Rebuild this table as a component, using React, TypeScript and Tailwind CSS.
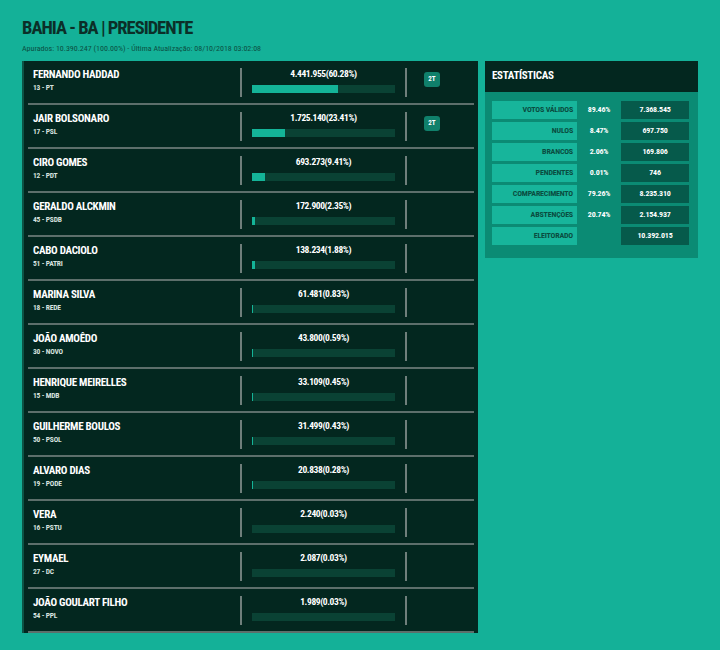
import React from 'react';

type Candidate = {
    name: string;
    party: string;
    votes: string;
    pct: string;
    value: number;
    second?: boolean;
};

const candidates: Candidate[] = [
    { name: 'FERNANDO HADDAD', party: '13 - PT', votes: '4.441.955', pct: '60.28%', value: 60.28, second: true },
    { name: 'JAIR BOLSONARO', party: '17 - PSL', votes: '1.725.140', pct: '23.41%', value: 23.41, second: true },
    { name: 'CIRO GOMES', party: '12 - PDT', votes: '693.273', pct: '9.41%', value: 9.41 },
    { name: 'GERALDO ALCKMIN', party: '45 - PSDB', votes: '172.900', pct: '2.35%', value: 2.35 },
    { name: 'CABO DACIOLO', party: '51 - PATRI', votes: '138.234', pct: '1.88%', value: 1.88 },
    { name: 'MARINA SILVA', party: '18 - REDE', votes: '61.481', pct: '0.83%', value: 0.83 },
    { name: 'JOÃO AMOÊDO', party: '30 - NOVO', votes: '43.800', pct: '0.59%', value: 0.59 },
    { name: 'HENRIQUE MEIRELLES', party: '15 - MDB', votes: '33.109', pct: '0.45%', value: 0.45 },
    { name: 'GUILHERME BOULOS', party: '50 - PSOL', votes: '31.499', pct: '0.43%', value: 0.43 },
    { name: 'ALVARO DIAS', party: '19 - PODE', votes: '20.838', pct: '0.28%', value: 0.28 },
    { name: 'VERA', party: '16 - PSTU', votes: '2.240', pct: '0.03%', value: 0.03 },
    { name: 'EYMAEL', party: '27 - DC', votes: '2.087', pct: '0.03%', value: 0.03 },
    { name: 'JOÃO GOULART FILHO', party: '54 - PPL', votes: '1.989', pct: '0.03%', value: 0.03 },
];

const stats = [
    { label: 'VOTOS VÁLIDOS', pct: '89.46%', value: '7.368.545' },
    { label: 'NULOS', pct: '8.47%', value: '697.750' },
    { label: 'BRANCOS', pct: '2.06%', value: '169.806' },
    { label: 'PENDENTES', pct: '0.01%', value: '746' },
    { label: 'COMPARECIMENTO', pct: '79.26%', value: '8.235.310' },
    { label: 'ABSTENÇÕES', pct: '20.74%', value: '2.154.937' },
    { label: 'ELEITORADO', pct: '', value: '10.392.015' },
];

function CandidateRow({ c }: { c: Candidate }) {
    return (
        <div className="mx-[4px] flex h-[44px] border-b-2 border-[#5d6f6b]">
            <div className="flex w-[212px] flex-col pl-[5px] pt-[7px]">
                <span className="text-[11px] font-bold leading-[14px] tracking-[-0.3px] text-white">{c.name}</span>
                <span className="mt-[1px] text-[7.5px] font-bold leading-[10px] tracking-[-0.2px] text-[#d6e2df]">{c.party}</span>
            </div>
            <div className="mt-[7px] h-[29px] w-[2px] bg-[#6f7f7b]" />
            <div className="flex w-[163px] flex-col items-center pt-[7px]">
                <span className="text-[9.5px] font-bold leading-[11px] tracking-[-0.4px] text-white">
                    {c.votes}({c.pct})
                </span>
                <div className="mt-[6px] h-[8px] w-[143px] bg-[#0a4234]">
                    <div className="h-full bg-[#14b498]" style={{ width: `${c.value}%` }} />
                </div>
            </div>
            <div className="mt-[7px] h-[29px] w-[2px] bg-[#6f7f7b]" />
            <div className="flex flex-1 pl-[17px] pt-[11px]">
                {c.second && (
                    <span className="flex h-[15px] w-[16px] items-center justify-center rounded-[3px] bg-[#10806b] text-[7px] font-bold text-white">
                        2T
                    </span>
                )}
            </div>
        </div>
    );
}

export default function App() {
    return (
        <main className="min-h-[650px] w-[720px] bg-[#14b198] px-[22px] pt-[16px] font-['Roboto',sans-serif] font-stretch-[75%]">
            <h1 className="text-[18.5px] font-bold leading-[24px] tracking-[-1px] text-[#0b2f28]">BAHIA - BA | PRESIDENTE</h1>
            <p className="mt-[4px] text-[8px] leading-[10px] text-[#0b4f42]">
                Apurados: 10.390.247 (100.00%) - Última Atualização: 08/10/2018 03:02:08
            </p>

            <div className="mt-[7px] flex items-start gap-[7px]">
                {/* Candidates list */}
                <section className="w-[456px] border-l-2 border-[#0c5546] bg-[#03271f]">
                    {candidates.map(c => (
                        <CandidateRow key={c.name} c={c} />
                    ))}
                </section>

                {/* Statistics */}
                <section className="w-[213px]">
                    <div className="flex h-[31px] items-center bg-[#03271f] px-[7px]">
                        <h2 className="text-[11px] font-bold tracking-[-0.3px] text-white">ESTATÍSTICAS</h2>
                    </div>
                    <div className="flex flex-col gap-[3px] bg-[#0b8b74] px-[7px] pb-[13px] pt-[9px]">
                        {stats.map(s => (
                            <div key={s.label} className="flex h-[18px] text-[8px] font-bold tracking-[-0.2px]">
                                <div className="flex w-[85px] items-center justify-end bg-[#17b59b] pr-[4px] text-[#0a4c40]">
                                    {s.label}
                                </div>
                                <div className="flex w-[44px] items-center justify-center text-white">
                                    {s.pct}
                                </div>
                                <div className="flex w-[68px] items-center justify-center bg-[#065a4b] text-white">
                                    {s.value}
                                </div>
                            </div>
                        ))}
                    </div>
                </section>
            </div>
        </main>
    );
}
